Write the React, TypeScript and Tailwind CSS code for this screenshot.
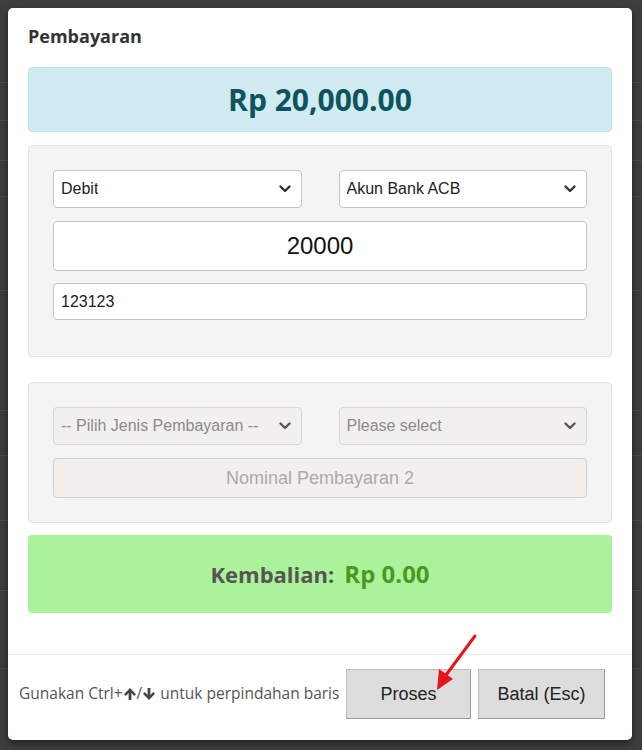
import React from 'react';

const Chevron: React.FC<{ muted?: boolean }> = ({ muted }) => (
  <svg width="12" height="8" viewBox="0 0 12 8" className="shrink-0">
    <path d="M1.5 1.5 L6 6 L10.5 1.5" fill="none" stroke={muted ? '#555' : '#333'} strokeWidth="2.4" strokeLinecap="round" strokeLinejoin="round" />
  </svg>
);

// solid arrow like the icon-font one in the hint text
const SolidArrow: React.FC<{ down?: boolean }> = ({ down }) => (
  <svg width="14" height="14" viewBox="0 0 14 14" className={down ? 'rotate-180' : ''}>
    <path d="M7 1 L13 7.2 L11.2 9 L8.4 6.1 L8.4 13 L5.6 13 L5.6 6.1 L2.8 9 L1 7.2 Z" fill="#444" strokeLinejoin="round" />
  </svg>
);

const FakeSelect: React.FC<{ label: string; disabled?: boolean }> = ({ label, disabled }) => (
  <div
    className={`flex-1 h-[38px] flex items-center justify-between pl-[7px] pr-[10px] rounded-[4px] border text-[16px] ${
      disabled ? 'bg-[#f2f0ee] border-[#d6d6d6] text-[#8a8a8a]' : 'bg-white border-[#c4c4c4] text-[#222]'
    }`}
  >
    <span className="truncate">{label}</span>
    <Chevron muted={disabled} />
  </div>
);

const bgRows = [82, 120, 160, 196, 290, 410, 455, 520, 590, 668];

const App: React.FC = () => {
  return (
    <div className="relative w-[642px] h-[750px] overflow-hidden bg-[#3e3e3e] font-['Liberation_Sans',Arial,sans-serif]">
      {/* page behind the overlay */}
      <div className="absolute inset-0">
        {bgRows.map((y) => (
          <div key={y} className="absolute left-0 right-0 h-px bg-[#4e4e4e]" style={{ top: y }} />
        ))}
      </div>

      <div className="relative ml-[8px] mt-[8px] w-[624px] h-[732px] bg-white rounded-[5px] shadow-[0_3px_9px_rgba(0,0,0,0.5)] flex flex-col">
        <div className="px-[20px] flex-1">
          <div className="h-[59px] pt-[14px]">
            <h4 className="text-[18px] leading-[28px] font-bold text-[#333] font-['Open_Sans',sans-serif]">Pembayaran</h4>
          </div>

          <div className="h-[65px] rounded-[4px] border border-[#bee5eb] bg-[#d1ecf1] flex items-center justify-center">
            <span className="text-[30px] font-bold text-[#0c5460] font-['Open_Sans',sans-serif]">Rp 20,000.00</span>
          </div>

          <div className="mt-[13px] h-[212px] rounded-[4px] border border-[#e3e3e3] bg-[#f4f4f4] px-[24px] pt-[24px] flex flex-col">
            <div className="flex gap-[37px]">
              <FakeSelect label="Debit" />
              <FakeSelect label="Akun Bank ACB" />
            </div>
            <input
              readOnly
              value="20000"
              className="mt-[13px] h-[50px] w-full rounded-[4px] border border-[#c4c4c4] bg-white text-center text-[24px] text-[#111] outline-none"
            />
            <input
              readOnly
              value="123123"
              className="mt-[12px] h-[37px] w-full rounded-[4px] border border-[#c4c4c4] bg-white pl-[7px] text-[16px] text-[#222] outline-none"
            />
          </div>

          <div className="mt-[25px] h-[141px] rounded-[4px] border border-[#e3e3e3] bg-[#f4f4f4] px-[24px] pt-[24px] flex flex-col">
            <div className="flex gap-[37px]">
              <FakeSelect label="-- Pilih Jenis Pembayaran --" disabled />
              <FakeSelect label="Please select" disabled />
            </div>
            <input
              readOnly
              placeholder="Nominal Pembayaran 2"
              className="mt-[13px] h-[40px] w-full rounded-[4px] border border-[#d0d0d0] bg-[#f2efed] text-center text-[18px] placeholder:text-[#aaa] outline-none"
            />
          </div>

          <div className="mt-[12px] h-[78px] rounded-[4px] bg-[#abf39a] flex items-center justify-center gap-[10px] font-['Open_Sans',sans-serif] font-bold">
            <span className="text-[22px] text-[#555]">Kembalian:</span>
            <span className="text-[24px] text-[#4a9a22]">Rp 0.00</span>
          </div>
        </div>

        <div className="h-[86px] border-t border-[#e5e5e5] flex items-start pt-[14px] pl-[11px] pr-[27px]">
          <div className="flex-1 h-[50px] flex items-center text-[15.5px] text-[#555] font-['Open_Sans',sans-serif]">
            <span>Gunakan Ctrl+</span>
            <SolidArrow />
            <span>/</span>
            <SolidArrow down />
            <span className="ml-[4px]">untuk perpindahan baris</span>
          </div>
          <div className="flex gap-[7px]">
            <button className="w-[125px] h-[50px] bg-[#dddddd] border border-[#bbb] border-b-[#999] border-r-[#999] text-[18px] text-[#222]">
              Proses
            </button>
            <button className="w-[127px] h-[50px] bg-[#dddddd] border border-[#bbb] border-b-[#999] border-r-[#999] text-[18px] text-[#222]">
              Batal (Esc)
            </button>
          </div>
        </div>
      </div>

      {/* annotation arrow */}
      <svg className="absolute left-0 top-0 pointer-events-none" width="642" height="750">
        <line x1="475" y1="636" x2="446" y2="675" stroke="#e8141b" strokeWidth="3" strokeLinecap="round" />
        <polygon points="437,690 439,669 453,679" fill="#e8141b" />
      </svg>
    </div>
  );
};

export default App;
